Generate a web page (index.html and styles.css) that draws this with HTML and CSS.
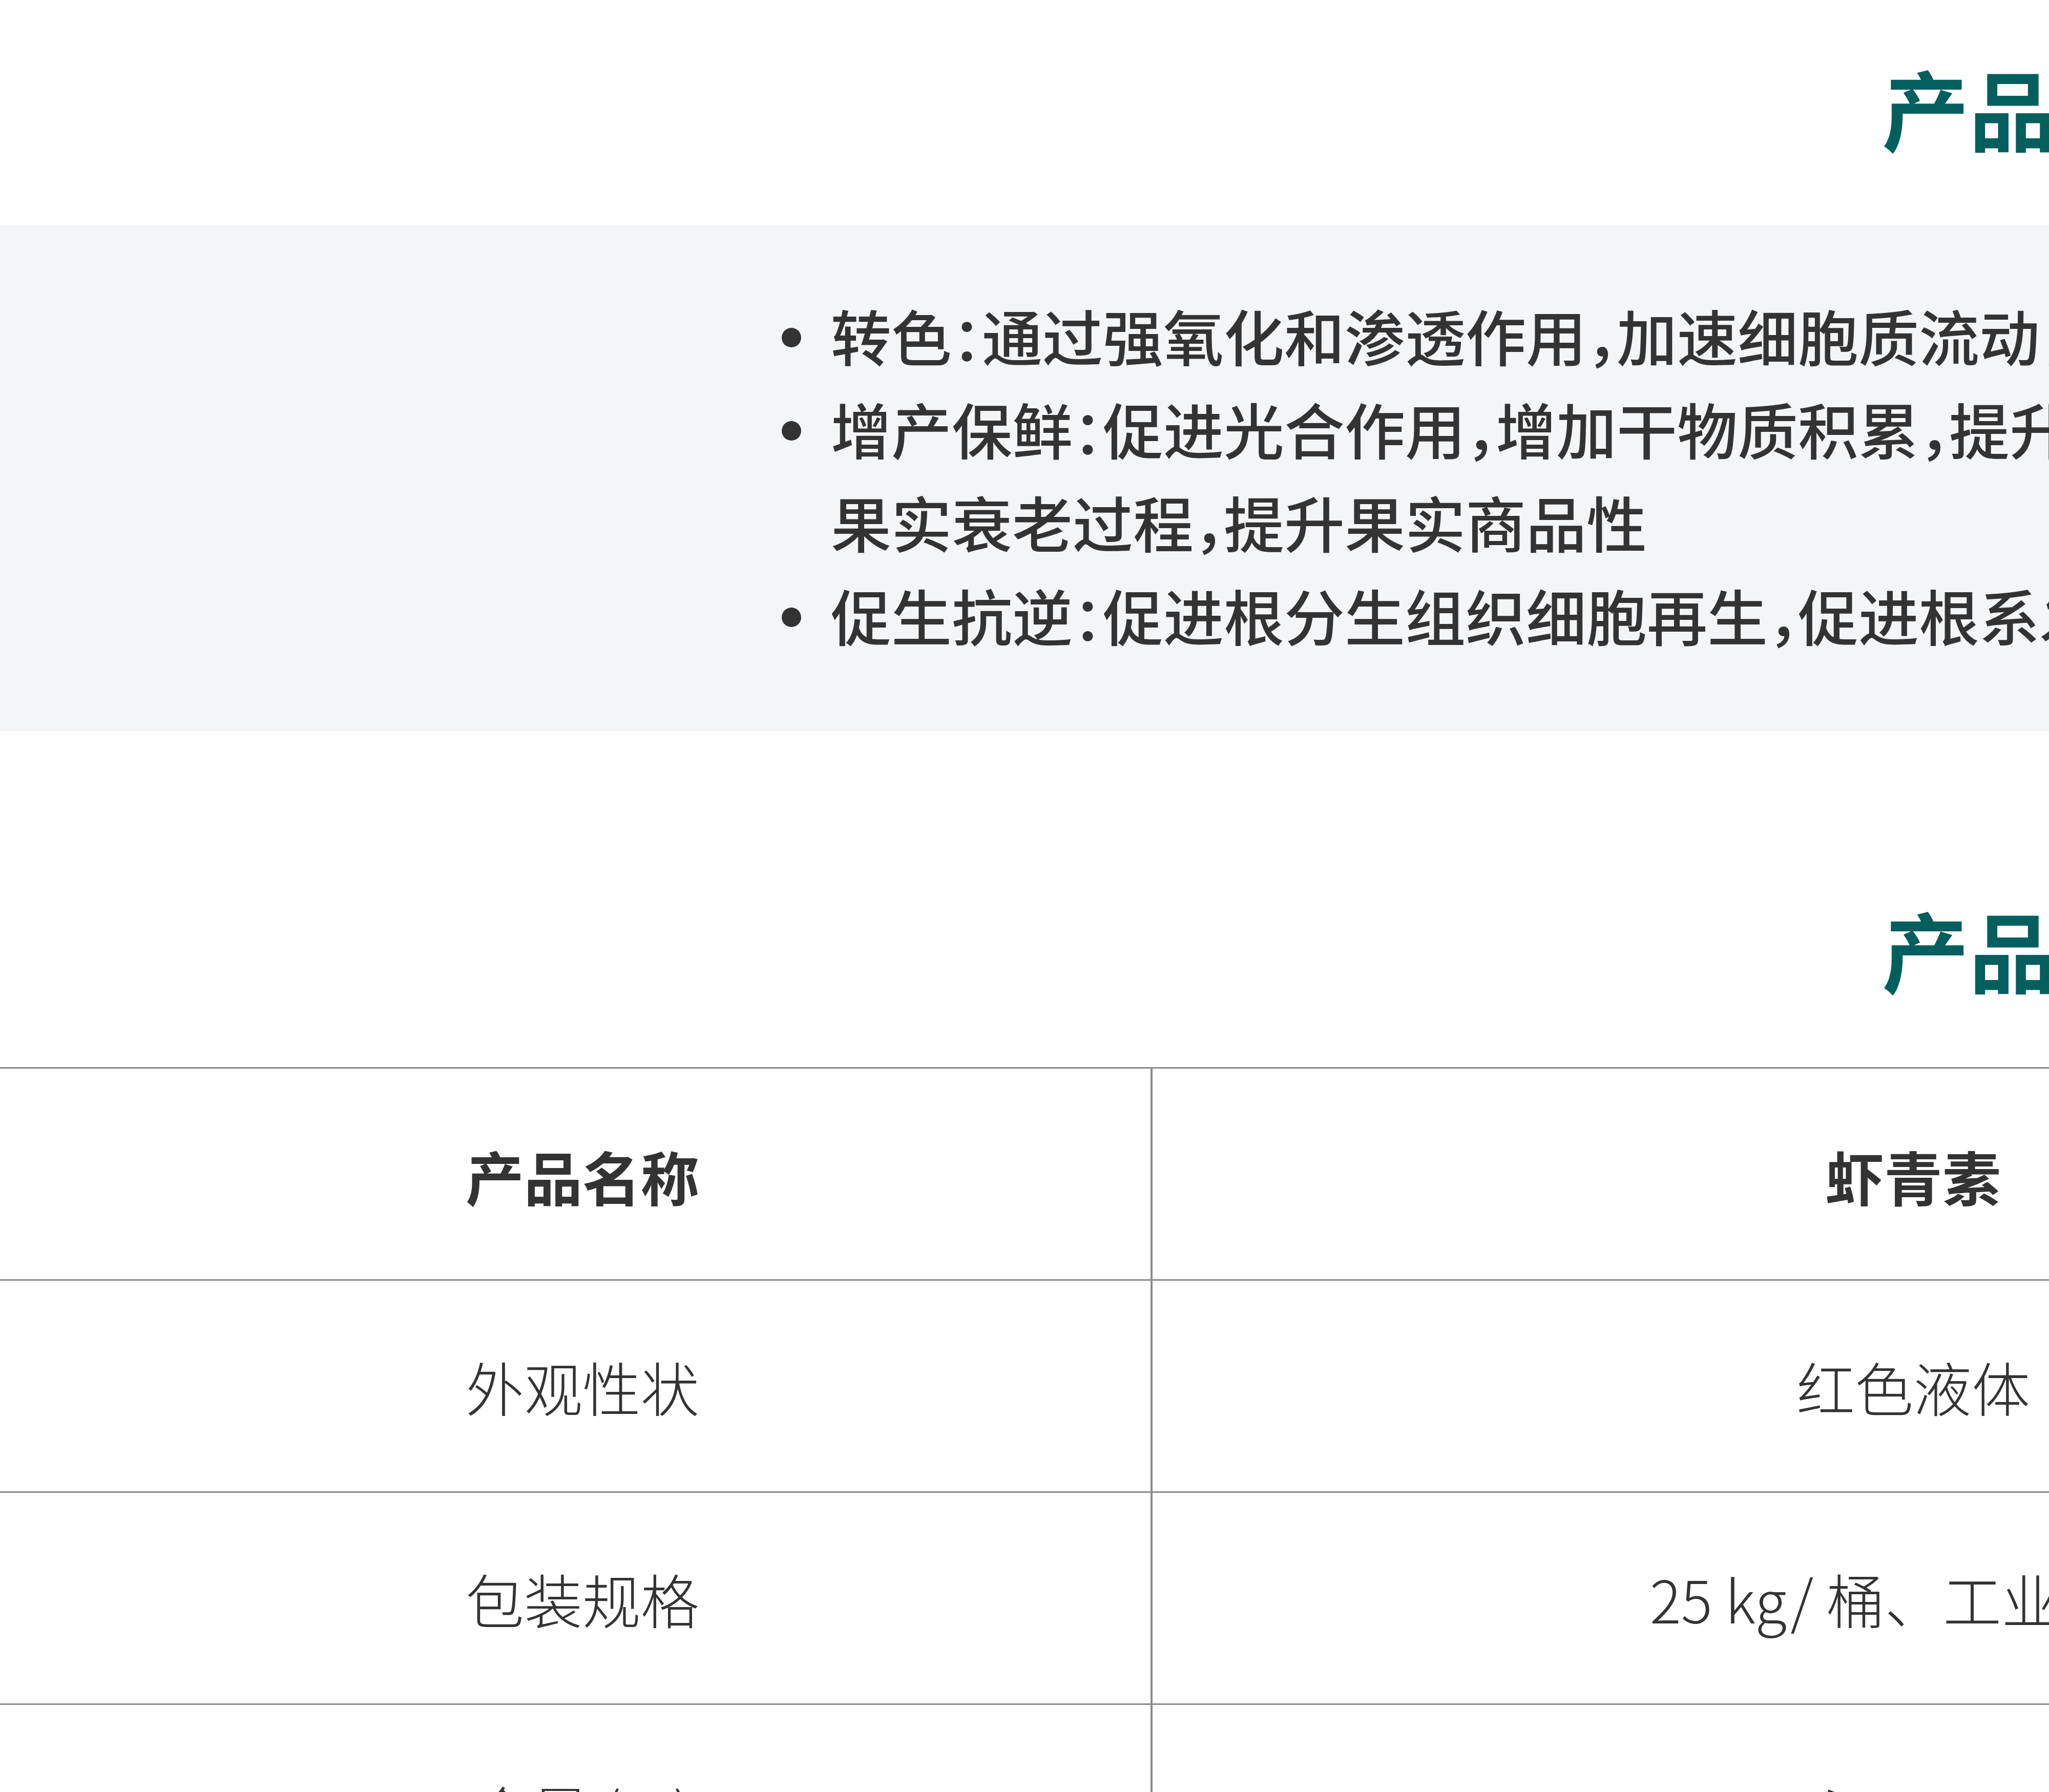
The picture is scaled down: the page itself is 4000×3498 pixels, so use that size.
FILE: index.html
```html
<!DOCTYPE html>
<html lang="zh-CN">
<head>
<meta charset="utf-8">
<title>产品功效</title>
<link rel="stylesheet" href="styles.css">
</head>
<body>
<div class="page">
  <section class="sec sec-effects">
    <h2 class="sec-title">产品功效</h2>
    <div class="band">
      <ul class="effects">
        <li><span>转色：通过强氧化和渗透作用，加速细胞质流动，促进果实着色均匀</span></li>
        <li><span>增产保鲜：促进光合作用，增加干物质积累，提升果实品质与产量，延缓<br>果实衰老过程，提升果实商品性</span></li>
        <li><span>促生抗逆：促进根分生组织细胞再生，促进根系发达，增强作物抗逆能力</span></li>
      </ul>
    </div>
  </section>
  <section class="sec sec-spec">
    <h2 class="sec-title">产品参数</h2>
    <div class="spec">
      <div class="spec-row spec-head">
        <div class="cell cell-key">产品名称</div>
        <div class="cell cell-val">虾青素</div>
      </div>
      <div class="spec-row">
        <div class="cell cell-key">外观性状</div>
        <div class="cell cell-val">红色液体</div>
      </div>
      <div class="spec-row">
        <div class="cell cell-key">包装规格</div>
        <div class="cell cell-val">25 kg/ 桶、工业吨桶</div>
      </div>
      <div class="spec-row">
        <div class="cell cell-key">含量 (%)</div>
        <div class="cell cell-val">≥ 10%</div>
      </div>
    </div>
  </section>
</div>
</body>
</html>
```

FILE: styles.css
```css
html, body {
  margin: 0;
  padding: 0;
  overflow: hidden;
  background: #ffffff;
}

body {
  font-family: "Noto Sans CJK SC", "Noto Sans", sans-serif;
  color: #333333;
}

.page {
  width: 8028px;
}

.sec-title {
  margin: 0;
  text-align: center;
  font-size: 170px;
  line-height: 246px;
  font-weight: 700;
  color: #025f5d;
}

.sec-effects .sec-title {
  padding-top: 86px;
  margin-bottom: 108px;
}

.band {
  background: #f4f5f7;
  padding: 123px 0 136px;
}

.effects {
  list-style: none;
  margin: 0 auto;
  padding: 0;
  width: 4976px;
  font-size: 118px;
  line-height: 182px;
  font-weight: 500;
  font-feature-settings: "halt";
}

.effects li {
  display: flex;
  white-space: nowrap;
}

.effects li::before {
  content: "";
  flex: none;
  width: 38px;
  height: 38px;
  border-radius: 50%;
  background: #333333;
  margin: 77px 58px 0 0;
}

.sec-spec .sec-title {
  margin-top: 302px;
  margin-bottom: 108px;
}

.spec {
  width: 5220px;
  border-top: 3px solid #8b8b8b;
}

.spec-row {
  display: grid;
  grid-template-columns: 2246px 1fr;
  height: 414px;
  box-sizing: border-box;
  border-bottom: 3px solid #8b8b8b;
}

.cell {
  display: flex;
  align-items: center;
  justify-content: center;
  font-size: 114px;
  font-weight: 300;
  white-space: nowrap;
}

.cell-key {
  padding-left: 28px;
}

.cell-val {
  border-left: 4px solid #8b8b8b;
}

.spec-head .cell {
  font-weight: 700;
  padding-top: 6px;
}
```
